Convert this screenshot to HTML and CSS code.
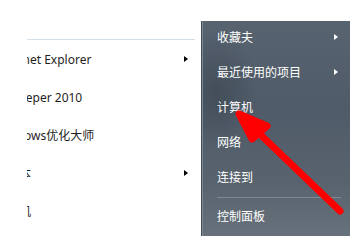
FILE: index.html
```html
<!DOCTYPE html>
<html lang="zh-CN">
<head>
    <meta charset="UTF-8">
    <meta name="viewport" content="width=device-width, initial-scale=1.0">
    <title>开始菜单</title>
    <link rel="stylesheet" href="styles.css">
</head>
<body>
    <div class="start-menu">
        <!-- Left side: pinned programs (cut off on the left) -->
        <div class="programs">
            <div class="programs-sep"></div>
            <ul class="program-list">
                <li class="program"><span class="label">Internet Explorer</span><span class="arrow-dark"></span></li>
                <li class="program"><span class="label">Diskeeper 2010</span></li>
                <li class="program"><span class="label">Windows优化大师</span></li>
                <li class="program"><span class="label">记事本</span><span class="arrow-dark"></span></li>
                <li class="program"><span class="label">计算机</span></li>
            </ul>
        </div>

        <!-- Right side: places -->
        <div class="places">
            <ul class="place-list">
                <li class="place"><span>收藏夫</span><span class="arrow-light"></span></li>
                <li class="place"><span>最近使用的项目</span><span class="arrow-light"></span></li>
                <li class="place"><span>计算机</span></li>
                <li class="place"><span>网络</span></li>
                <li class="place"><span>连接到</span></li>
            </ul>
            <div class="places-sep"></div>
            <ul class="place-list">
                <li class="place"><span>控制面板</span></li>
            </ul>
        </div>
    </div>

    <!-- red pointer drawn over the menu -->
    <svg class="pointer" width="358" height="243" viewBox="0 0 358 243">
        <path d="M267 126 L239 114 L252 139 Z" fill="#ff0000" stroke="#ff0000" stroke-width="7" stroke-linejoin="round"/>
        <line x1="241" y1="116" x2="340" y2="211" stroke="#ff0000" stroke-width="7" stroke-linecap="round"/>
    </svg>
</body>
</html>
```

FILE: styles.css
```css
body {
    margin: 0;
    background: #ffffff;
    font-family: "Noto Sans", "Noto Sans CJK SC", sans-serif;
    font-size: 12px;
    width: 358px;
    height: 243px;
    overflow: hidden;
    position: relative;
}

ul {
    list-style: none;
    margin: 0;
    padding: 0;
}

.start-menu {
    display: flex;
    align-items: flex-start;
}

/* left column */
.programs {
    width: 201px;
}

.programs-sep {
    margin-top: 39px;
    margin-left: 27px;
    width: 168px;
    height: 1px;
    background: #d5dfe9;
}

.program {
    display: flex;
    align-items: center;
    height: 38px;
    padding-left: 27px;
    padding-right: 13px;
    color: #1e1e1e;
}

.program .label {
    flex: 1;
    overflow: hidden;
    white-space: nowrap;
    text-indent: -32px;
}

.arrow-dark {
    width: 0;
    height: 0;
    border-top: 3.5px solid transparent;
    border-bottom: 3.5px solid transparent;
    border-left: 4px solid #000000;
}

/* right column */
.places {
    margin-top: 21px;
    width: 148px;
    height: 215px;
    border-left: 1px solid #414d5a;
    background:
        radial-gradient(ellipse 40px 60px at 10% 32%, rgba(40, 50, 60, 0.35), rgba(40, 50, 60, 0)),
        linear-gradient(to bottom, #57636f 0%, #4f5b68 40%, #58636e 75%, #67717b 100%);
    box-shadow: inset 1px 0 0 #7b8793;
}

.place {
    display: flex;
    align-items: center;
    justify-content: space-between;
    box-sizing: border-box;
    height: 35px;
    padding: 0 12px 3px 15px;
    color: #ffffff;
}

.arrow-light {
    width: 0;
    height: 0;
    border-top: 3.5px solid transparent;
    border-bottom: 3.5px solid transparent;
    border-left: 4px solid #ffffff;
}

.places-sep {
    margin: 1px 9px 2px 15px;
    height: 1px;
    background: #7d8893;
}

.pointer {
    position: absolute;
    left: 0;
    top: 0;
}
```
